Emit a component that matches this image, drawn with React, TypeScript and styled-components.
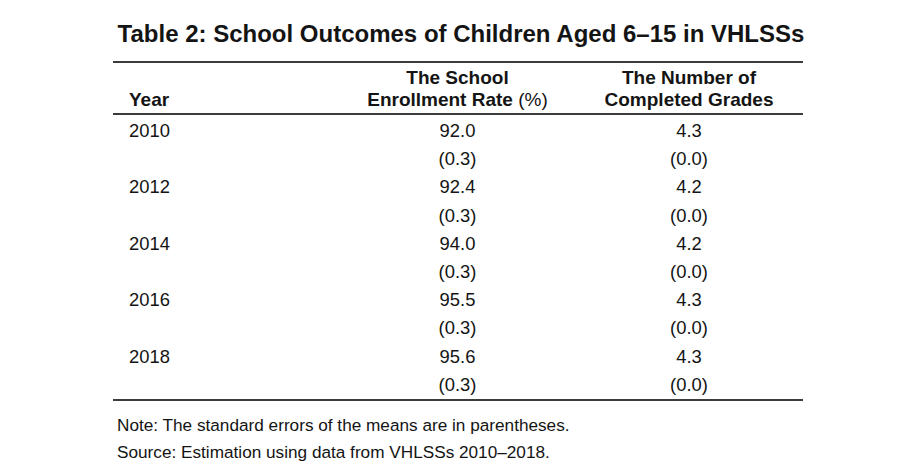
import React from "react";
import styled, { createGlobalStyle } from "styled-components";

const Global = createGlobalStyle`
  html, body { margin: 0; padding: 0; background: #ffffff; }
  body { font-family: "Liberation Sans", Arial, sans-serif; color: #141414; }
`;

const Page = styled.div`
  width: 921px;
  height: 475px;
  padding: 19px 0 0 113px;
  box-sizing: border-box;
  overflow: hidden;
`;

const Frame = styled.div`
  width: 690px;
`;

const Title = styled.h1`
  margin: 0 -16px 0 -10px;
  font-size: 24px;
  font-weight: 700;
  line-height: 30px;
  text-align: center;
  white-space: nowrap;
`;

const Table = styled.div`
  margin-top: 12px;
  border-top: 2px solid #3c3c3c;
  border-bottom: 2px solid #3c3c3c;
`;

const Grid = styled.div<{ $pad?: string }>`
  display: grid;
  grid-template-columns: 227px 235px 228px;
  padding: ${(p) => p.$pad || "0"};
`;

const Head = styled(Grid)`
  border-bottom: 2px solid #3c3c3c;
`;

const HeadCell = styled.div<{ $align: "left" | "center" }>`
  font-size: 19px;
  font-weight: 700;
  line-height: 22px;
  padding: 4px 0 2px ${(p) => (p.$align === "left" ? "16px" : "0")};
  text-align: ${(p) => p.$align};
  display: flex;
  flex-direction: column;
  justify-content: flex-end;
`;

const Unit = styled.span`
  font-weight: 400;
`;

const Cell = styled.div<{ $align: "left" | "center" }>`
  font-size: 18.4px;
  line-height: 28.2px;
  height: 28.2px;
  padding-left: ${(p) => (p.$align === "left" ? "16px" : "0")};
  text-align: ${(p) => p.$align};
`;

const Notes = styled.div`
  margin-top: 11px;
  padding-left: 4px;
  font-size: 17.2px;
  line-height: 27px;
`;

const rows = [
  { year: "2010", rate: "92.0", grades: "4.3" },
  { year: "2012", rate: "92.4", grades: "4.2" },
  { year: "2014", rate: "94.0", grades: "4.2" },
  { year: "2016", rate: "95.5", grades: "4.3" },
  { year: "2018", rate: "95.6", grades: "4.3" },
];

export default function App() {
  return (
    <>
      <Global />
      <Page>
        <Frame>
          <Title>Table 2: School Outcomes of Children Aged 6–15 in VHLSSs</Title>
          <Table>
            <Head>
              <HeadCell $align="left">Year</HeadCell>
              <HeadCell $align="center">
                <span>The School</span>
                <span>
                  Enrollment Rate <Unit>(%)</Unit>
                </span>
              </HeadCell>
              <HeadCell $align="center">
                <span>The Number of</span>
                <span>Completed Grades</span>
              </HeadCell>
            </Head>
            <Grid $pad="2px 0 0 0">
              {rows.map((r) => (
                <React.Fragment key={r.year}>
                  <Cell $align="left">{r.year}</Cell>
                  <Cell $align="center">{r.rate}</Cell>
                  <Cell $align="center">{r.grades}</Cell>
                  <Cell $align="left" />
                  <Cell $align="center">(0.3)</Cell>
                  <Cell $align="center">(0.0)</Cell>
                </React.Fragment>
              ))}
            </Grid>
          </Table>
          <Notes>
            <div>Note: The standard errors of the means are in parentheses.</div>
            <div>Source: Estimation using data from VHLSSs 2010–2018.</div>
          </Notes>
        </Frame>
      </Page>
    </>
  );
}
